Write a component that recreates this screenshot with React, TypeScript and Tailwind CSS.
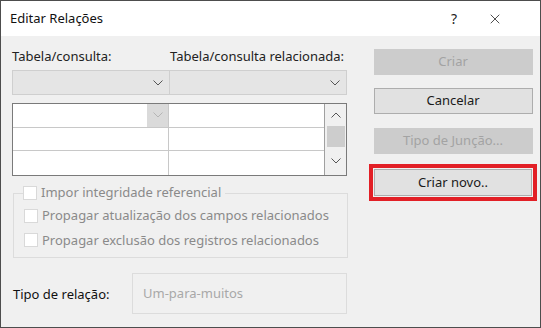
import { X } from "lucide-react";

const font = "font-['Segoe_UI','Noto_Sans','Open_Sans',sans-serif]";

function Chevron({ className }: { className?: string }) {
    return (
        <svg width="10" height="6" viewBox="0 0 10 6" className={className}>
            <polyline points="0.5,0.5 5,5 9.5,0.5" fill="none" stroke="currentColor" strokeWidth="1" />
        </svg>
    );
}

function Checkbox({ label }: { label: string }) {
    return (
        <div className="flex items-center gap-[4px]">
            <div className="w-[14px] h-[14px] bg-white border border-[#d9d9d9]" />
            <span className="text-[#8a8a8a]">{label}</span>
        </div>
    );
}

function Button({ label, disabled }: { label: string; disabled?: boolean }) {
    return (
        <div
            className={`w-[159px] h-[26px] flex items-center justify-center border ${disabled
                ? "bg-[#cccccc] border-[#cccccc] text-[#a3a3a3]"
                : "bg-[#e1e1e1] border-[#adadad] text-[#1a1a1a]"
                }`}
        >
            {label}
        </div>
    );
}

export default function App() {
    return (
        <div className={`w-[541px] h-[328px] border border-[#4d4d4d] flex flex-col text-[13px] ${font}`}>
            {/* Title bar */}
            <div className="h-[35px] bg-white flex items-center shrink-0">
                <span className="ml-[9px] text-[13px] text-[#111]">Editar Relações</span>
                <span className="ml-auto mr-[30px] text-[14px] text-[#222]">?</span>
                <X className="w-[16px] h-[16px] mr-[37px] text-[#222]" strokeWidth={1.2} />
            </div>

            <div className="flex-1 bg-[#f0f0f0] flex">
                {/* Left column */}
                <div className="ml-[11px] w-[335px] flex flex-col">
                    <div className="grid grid-cols-[158px_177px] mt-[11px] h-[20px] items-center text-[#222]">
                        <span>Tabela/consulta:</span>
                        <span>Tabela/consulta relacionada:</span>
                    </div>
                    <div className="grid grid-cols-[158px_177px] mt-[3px] h-[25px]">
                        <div className="bg-[#e5e5e5] border border-[#cfcfcf] flex items-center justify-end pr-[6px] text-[#555]">
                            <Chevron />
                        </div>
                        <div className="bg-[#e5e5e5] border border-l-0 border-[#cfcfcf] flex items-center justify-end pr-[6px] text-[#555]">
                            <Chevron />
                        </div>
                    </div>

                    {/* Grid */}
                    <div className="mt-[8px] h-[73px] border border-[#7a7a7a] bg-white flex">
                        <div className="flex-1 grid grid-cols-[156px_1fr] grid-rows-3">
                            <div className="border-r border-b border-[#c8c8c8] flex justify-end">
                                <div className="w-[21px] bg-[#dadada] flex items-center justify-center text-[#b5b5b5]">
                                    <Chevron />
                                </div>
                            </div>
                            <div className="border-b border-[#c8c8c8]" />
                            <div className="border-r border-b border-[#c8c8c8]" />
                            <div className="border-b border-[#c8c8c8]" />
                            <div className="border-r border-[#c8c8c8]" />
                            <div />
                        </div>
                        <div className="w-[22px] border-l border-[#a0a0a0] bg-[#f0f0f0] flex flex-col items-center">
                            <div className="h-[22px] flex items-center justify-center text-[#555]">
                                <Chevron className="rotate-180" />
                            </div>
                            <div className="w-[18px] h-[21px] bg-[#cdcdcd]" />
                            <div className="flex-1 flex items-center justify-center text-[#555]">
                                <Chevron />
                            </div>
                        </div>
                    </div>

                    {/* Group box */}
                    <fieldset className="mt-[7px] ml-[1px] w-[335px] h-[75px] border border-[#dcdcdc] px-[10px] pt-0">
                        <legend className="-ml-[1px] h-[20px] pr-[4px]">
                            <Checkbox label="Impor integridade referencial" />
                        </legend>
                        <div className="flex flex-col gap-[5px] mt-[3px]">
                            <Checkbox label="Propagar atualização dos campos relacionados" />
                            <Checkbox label="Propagar exclusão dos registros relacionados" />
                        </div>
                    </fieldset>

                    <div className="mt-[15px] flex items-center">
                        <span className="w-[120px] pl-[1px] pt-[3px] text-[#111]">Tipo de relação:</span>
                        <div className="w-[215px] h-[41px] border border-[#dcdcdc] pl-[10px] pt-[10px] text-[#a8a8a8]">
                            Um-para-muitos
                        </div>
                    </div>
                </div>

                {/* Right column */}
                <div className="ml-[22px] flex flex-col items-center pt-[13px]">
                    <Button label="Criar" disabled />
                    <div className="mt-[13px]">
                        <Button label="Cancelar" />
                    </div>
                    <div className="mt-[14px]">
                        <Button label="Tipo de Junção..." disabled />
                    </div>
                    <div className="mt-[10px] border-[4px] border-[#e21f26] p-[1px]">
                        <div className="w-[158px] h-[27px] flex items-center justify-center bg-[#e1e1e1] border border-[#adadad] text-[#1a1a1a]">
                            Criar novo..
                        </div>
                    </div>
                </div>
            </div>
        </div>
    );
}
